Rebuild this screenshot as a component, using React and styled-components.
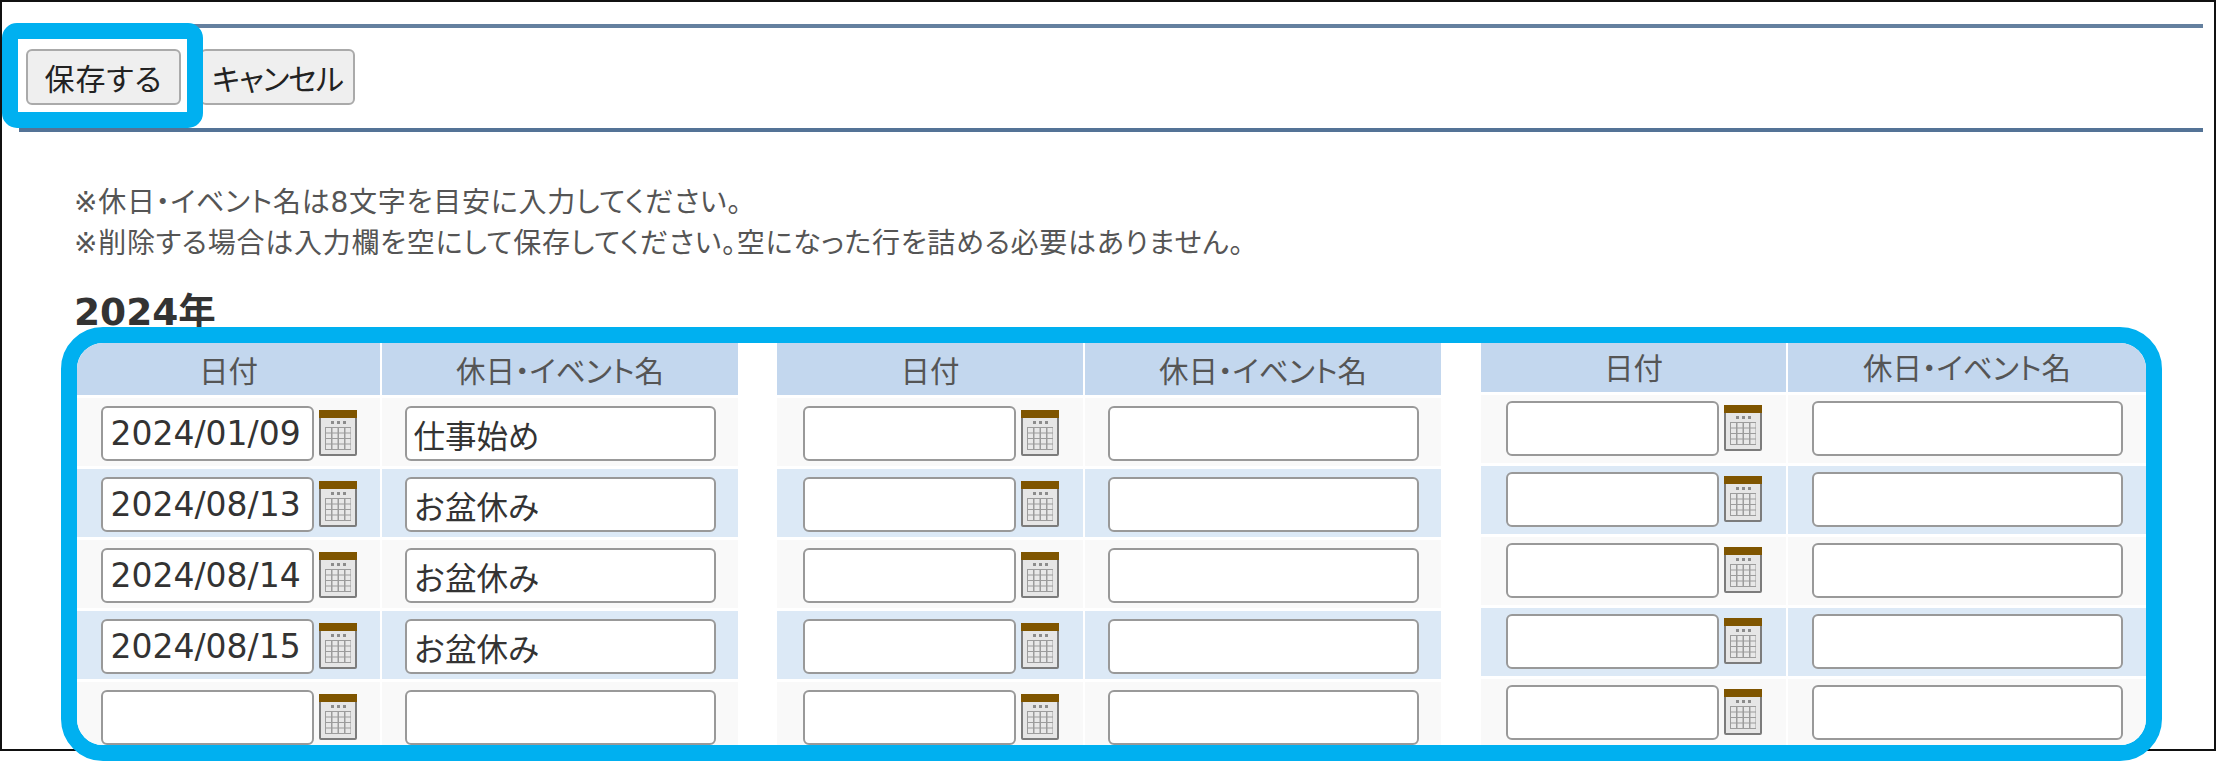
import React from "react";
import styled, { createGlobalStyle } from "styled-components";

const JP_FONT = `"Noto Sans CJK JP", "Noto Sans", sans-serif`;
const MIXED_FONT = `"DejaVu Sans", "Noto Sans CJK JP", sans-serif`;

const GlobalStyle = createGlobalStyle`
  html, body {
    margin: 0;
    padding: 0;
    background: #fff;
  }
`;

const Page = styled.div`
  position: relative;
  width: 2217px;
  height: 761px;
  overflow: hidden;
  background: #fff;
  font-family: ${JP_FONT};
`;

const Frame = styled.div`
  box-sizing: border-box;
  width: 2216px;
  height: 751px;
  padding-top: 22px;
  border: 2px solid #111;
`;

const Toolbar = styled.div`
  box-sizing: border-box;
  display: flex;
  gap: 19px;
  width: 2184px;
  height: 108px;
  margin-left: 17px;
  padding: 21px 0 0 7px;
  border-top: 4px solid #64809f;
  border-bottom: 4px solid #547396;
`;

const Button = styled.button`
  box-sizing: border-box;
  width: 155px;
  height: 56px;
  padding: 0;
  border: 2px solid #aaa;
  border-radius: 6px;
  background: #efefef;
  color: #222;
  font-family: ${JP_FONT};
  font-size: 30px;
  font-feature-settings: "palt";
  letter-spacing: ${({ $spacing }) => $spacing}px;
  line-height: 1;
`;

const Highlight = styled.div`
  position: absolute;
  top: 23px;
  left: 2px;
  box-sizing: border-box;
  width: 201px;
  height: 105px;
  border: 16px solid #00b0f0;
  border-radius: 15px;
`;

const Notes = styled.div`
  margin: 50px 0 0 72px;
  color: #555;
  font-family: ${MIXED_FONT};
  font-size: 28px;
  font-feature-settings: "palt";
  letter-spacing: 0.75px;
  line-height: 41px;
`;

const YearHeading = styled.h2`
  height: 63px;
  margin: 0 0 0 72px;
  padding-top: 27px;
  box-sizing: border-box;
  color: #333;
  font-family: ${MIXED_FONT};
  font-size: 37.5px;
  font-weight: 700;
  line-height: 42px;
`;

const Panel = styled.div`
  position: relative;
  box-sizing: border-box;
  display: flex;
  gap: 39px;
  width: 2101px;
  height: 434px;
  margin-left: 59px;
  overflow: hidden;
  border: 16px solid #00b0f0;
  border-radius: 42px;
  background: #fff;
`;

const HolidayTable = styled.div`
  display: grid;
  flex: none;
  grid-template-columns: ${({ $dateWidth }) => $dateWidth}px ${({ $nameWidth }) => $nameWidth}px;
  grid-template-rows: ${({ $headHeight }) => $headHeight}px repeat(5, 68px);
  column-gap: 2px;
  row-gap: 3px;
  margin-right: ${({ $extraGap }) => $extraGap}px;
`;

const HeadCell = styled.div`
  box-sizing: border-box;
  display: flex;
  align-items: center;
  justify-content: center;
  padding-bottom: ${({ $lift }) => $lift}px;
  background: #c3d7ee;
  color: #555;
  font-size: 29.5px;
  font-feature-settings: "palt";
`;

const Cell = styled.div`
  box-sizing: border-box;
  display: flex;
  align-items: flex-start;
  justify-content: center;
  gap: 5px;
  padding-top: ${({ $top }) => $top}px;
  padding-left: ${({ $left }) => $left || 0}px;
  background: ${({ $even }) => ($even ? "#dce9f6" : "#f9f9f9")};
`;

const TextInput = styled.input`
  box-sizing: border-box;
  flex: none;
  width: ${({ $wide }) => ($wide ? 311 : 213)}px;
  height: 55px;
  padding: 0 0 0 ${({ $wide }) => ($wide ? 7 : 8)}px;
  border: 2px solid #999;
  border-radius: 6px;
  outline: none;
  background: #fff;
  color: #333;
  font-family: ${MIXED_FONT};
  font-size: ${({ $wide }) => ($wide ? 31.5 : 33)}px;
`;

const CalendarSvg = styled.svg`
  display: block;
  flex: none;
  margin-top: 4px;
  filter: blur(0.4px);
`;

const CalendarIcon = () => (
  <CalendarSvg width="38" height="46" viewBox="0 0 38 46">
    <rect x="1" y="1" width="36" height="44" rx="1" fill="#e6e6e6" stroke="#7c7c7c" strokeWidth="2" />
    <rect x="0" y="0" width="38" height="8" fill="#7f5500" />
    {[12, 18, 24].map((x) => (
      <rect key={x} x={x} y="11" width="3" height="3" fill="#8c8c8c" />
    ))}
    <rect x="6" y="17" width="26" height="23" fill="#9c9c9c" />
    {[7, 13.5, 20, 26.5].map((x) =>
      [18, 23.5, 29, 34.5].map((y) => (
        <rect key={`${x}-${y}`} x={x} y={y} width="5" height="4.5" fill="#e8e8e8" />
      ))
    )}
  </CalendarSvg>
);

const tables = [
  {
    dateWidth: 303,
    nameWidth: 356,
    headHeight: 52,
    top: 8,
    extraGap: 0,
    lift: 0,
    dateLeft: 0,
    rows: [
      ["2024/01/09", "仕事始め"],
      ["2024/08/13", "お盆休み"],
      ["2024/08/14", "お盆休み"],
      ["2024/08/15", "お盆休み"],
      ["", ""],
    ],
  },
  {
    dateWidth: 306,
    nameWidth: 356,
    headHeight: 52,
    top: 8,
    extraGap: 1,
    lift: 0,
    dateLeft: 2,
    rows: [["", ""], ["", ""], ["", ""], ["", ""], ["", ""]],
  },
  {
    dateWidth: 305,
    nameWidth: 358,
    headHeight: 49,
    top: 6,
    extraGap: 0,
    lift: 4,
    dateLeft: 0,
    rows: [["", ""], ["", ""], ["", ""], ["", ""], ["", ""]],
  },
];

const App = () => {
  return (
    <Page>
      <GlobalStyle />
      <Frame>
        <Toolbar>
          <Button $spacing={1}>保存する</Button>
          <Button $spacing={-1}>キャンセル</Button>
        </Toolbar>
        <Notes>
          <div>※休日・イベント名は8文字を目安に入力してください。</div>
          <div>※削除する場合は入力欄を空にして保存してください。空になった行を詰める必要はありません。</div>
        </Notes>
        <YearHeading>2024年</YearHeading>
        <Panel>
          {tables.map((table, t) => (
            <HolidayTable
              key={t}
              $dateWidth={table.dateWidth}
              $nameWidth={table.nameWidth}
              $headHeight={table.headHeight}
              $extraGap={table.extraGap}
            >
              <HeadCell $lift={table.lift}>日付</HeadCell>
              <HeadCell $lift={table.lift}>休日・イベント名</HeadCell>
              {table.rows.map(([date, name], i) => (
                <React.Fragment key={i}>
                  <Cell $even={i % 2 === 1} $top={table.top} $left={table.dateLeft}>
                    <TextInput defaultValue={date} />
                    <CalendarIcon />
                  </Cell>
                  <Cell $even={i % 2 === 1} $top={table.top}>
                    <TextInput $wide defaultValue={name} />
                  </Cell>
                </React.Fragment>
              ))}
            </HolidayTable>
          ))}
        </Panel>
      </Frame>
      <Highlight />
    </Page>
  );
};

export default App;
